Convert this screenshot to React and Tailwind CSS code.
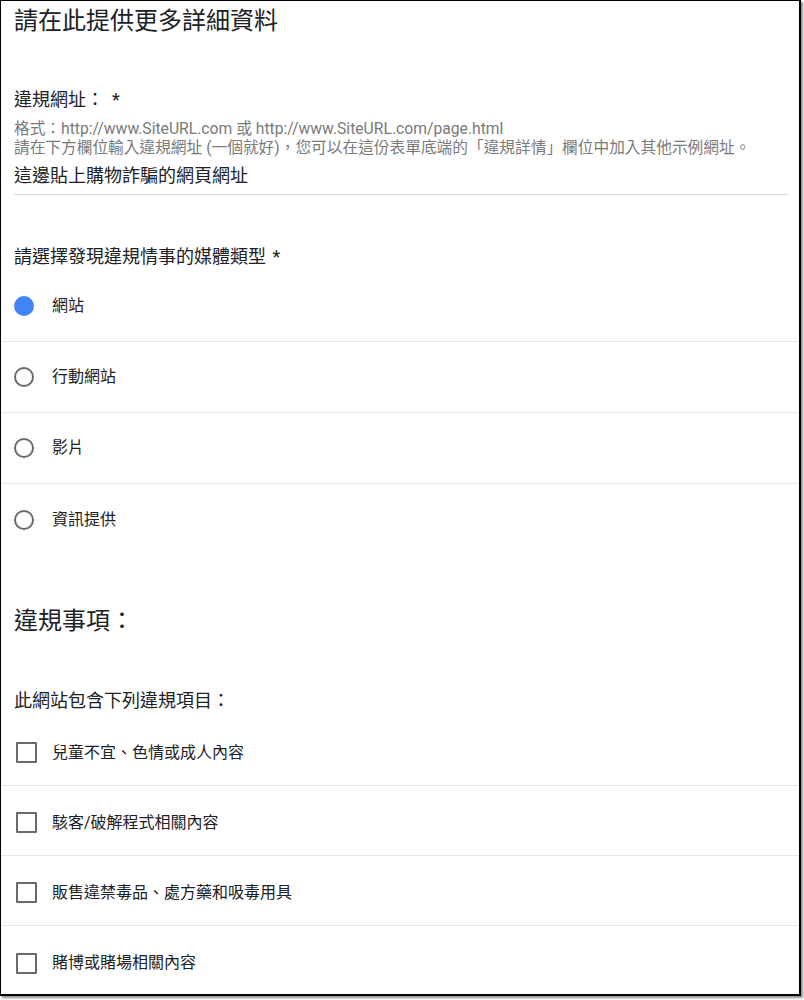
import React from "react";

function Radio({ checked, label, last }) {
  return (
    <div
      className={`h-[71px] flex items-center pl-[13px] ${last ? "" : "border-b border-[#e6e6e6]"}`}
    >
      {checked ? (
        <span className="w-[20px] h-[20px] rounded-full bg-[#4285f4] shrink-0" />
      ) : (
        <span className="w-[20px] h-[20px] rounded-full border-2 border-[#6b6b6b] shrink-0" />
      )}
      <span className="ml-[18px] text-[16px] leading-[20px] text-[#202124]">{label}</span>
    </div>
  );
}

function Check({ label, last }) {
  return (
    <div
      className={`h-[70px] flex items-center pl-[15px] pt-[4px] ${last ? "" : "border-b border-[#e6e6e6]"}`}
    >
      <span className="w-[21px] h-[21px] border-2 border-[#6b6b6b] rounded-[1px] shrink-0" />
      <span className="ml-[15px] text-[16px] leading-[20px] text-[#202124]">{label}</span>
    </div>
  );
}

export default function App() {
  return (
    <div className="w-[804px] h-[1000px] bg-white font-['Roboto','Noto_Sans_CJK_TC',sans-serif]">
      <div className="w-[801px] h-[996px] bg-white border-l border-t border-r-2 border-b-2 border-black shadow-[2px_2px_2px_rgba(0,0,0,0.45)] overflow-hidden">
        <div className="pl-[13px] pt-[4px]">
          <h1 className="text-[24px] leading-[32px] text-[#202124] font-normal">
            請在此提供更多詳細資料
          </h1>
          <div className="mt-[51px] text-[18px] leading-[24px] text-[#202124]">
            違規網址：<span className="ml-[8px]">*</span>
          </div>
          <div className="mt-[7px] text-[15.7px] leading-[19px] text-[#7a7a7a]">
            <div>格式：http://www.SiteURL.com 或 http://www.SiteURL.com/page.html</div>
            <div>
              請在下方欄位輸入違規網址 (一個就好)，您可以在這份表單底端的「違規詳情」欄位中加入其他示例網址。
            </div>
          </div>
          <div className="mt-[7px] text-[18px] leading-[24px] text-[#202124]">
            這邊貼上購物詐騙的網頁網址
          </div>
          <div className="mt-[6px] mr-[11px] h-px bg-[#dadada]" />
          <div className="mt-[50px] text-[18px] leading-[24px] text-[#202124]">
            請選擇發現違規情事的媒體類型 <span className="ml-[2px]">*</span>
          </div>
        </div>
        <div className="mt-[2px]">
          <Radio checked label="網站" />
          <Radio label="行動網站" />
          <Radio label="影片" />
          <Radio label="資訊提供" last />
        </div>
        <div className="pl-[13px]">
          <h2 className="mt-[50px] text-[24px] leading-[32px] text-[#202124] font-normal">
            違規事項：
          </h2>
          <div className="mt-[52px] text-[18px] leading-[24px] text-[#202124]">
            此網站包含下列違規項目：
          </div>
        </div>
        <div className="mt-[3px]">
          <Check label="兒童不宜、色情或成人內容" />
          <Check label="駭客/破解程式相關內容" />
          <Check label="販售違禁毒品、處方藥和吸毒用具" />
          <Check label="賭博或賭場相關內容" last />
        </div>
      </div>
    </div>
  );
}
